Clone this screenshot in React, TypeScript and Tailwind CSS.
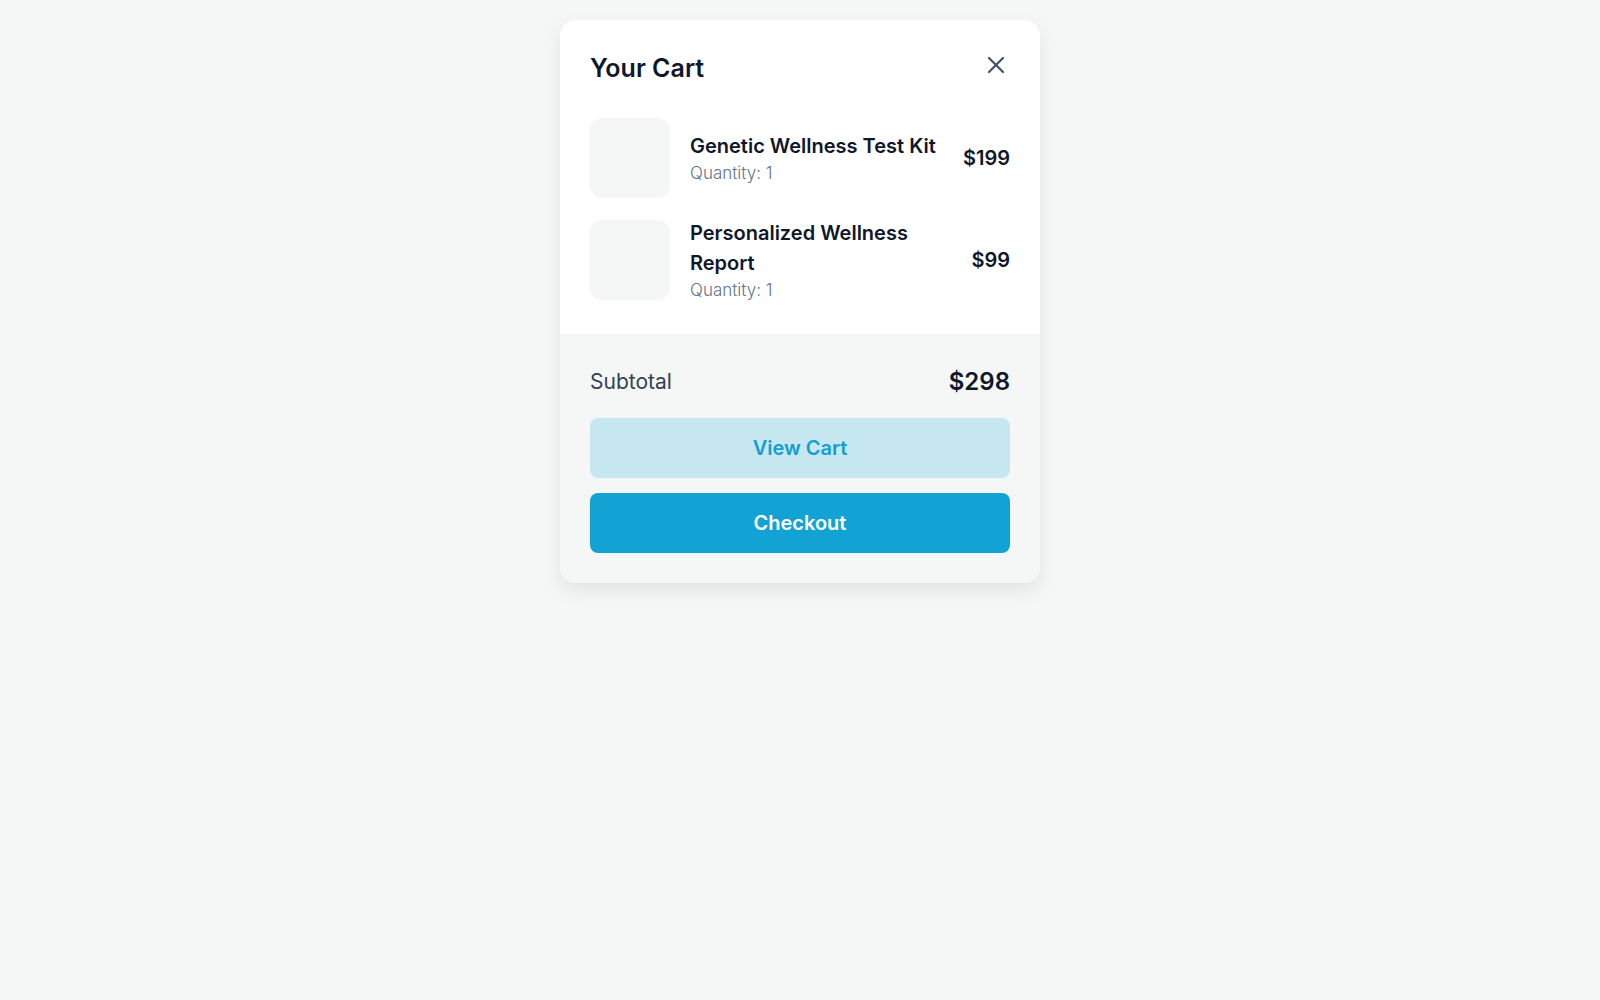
import React from "react";

const items = [
  { name: "Genetic Wellness Test Kit", qty: 1, price: "$199" },
  { name: "Personalized Wellness Report", qty: 1, price: "$99" },
];

export default function App() {
  return (
    <div
      className="min-h-screen w-full bg-[#f5f7f6] flex justify-center pt-5"
      style={{ fontFamily: "Inter, 'Noto Sans', sans-serif" }}
    >
      <div className="w-[480px] self-start rounded-2xl bg-white overflow-hidden shadow-[0_8px_20px_rgba(0,0,0,0.08)]">
        <div className="px-[30px] pt-[30px] pb-[32px]">
          <div className="flex items-start justify-between mb-[31px]">
            <h2 className="text-[25px] leading-[37px] font-semibold text-[#0f172a]">
              Your Cart
            </h2>
            <button className="mt-px text-[#475569]" aria-label="Close">
              <svg width="28" height="28" viewBox="0 0 24 24" fill="none" stroke="currentColor" strokeWidth="2" strokeLinecap="round" strokeLinejoin="round">
                <path d="M18 6 6 18" />
                <path d="m6 6 12 12" />
              </svg>
            </button>
          </div>
          <div className="flex flex-col gap-5">
            {items.map((it) => (
              <div key={it.name} className="flex items-center gap-5">
                <div className="w-20 h-20 shrink-0 rounded-xl bg-[#f5f7f7]" />
                <div className="flex-1 min-w-0">
                  <div className="text-[20px] leading-[30px] font-semibold text-[#0f172a]">{it.name}</div>
                  <div className="text-[17px] leading-[24px] font-light text-[#64748b]">Quantity: {it.qty}</div>
                </div>
                <div className="ml-1 text-[20px] leading-[30px] font-semibold text-[#0f172a]">{it.price}</div>
              </div>
            ))}
          </div>
        </div>
        <div className="bg-[#f5f7f7] px-[30px] pt-[32px] pb-[30px]">
          <div className="flex items-center justify-between h-8 mb-[20px]">
            <span className="text-[21px] text-[#334155]">Subtotal</span>
            <span className="text-[24px] font-semibold text-[#0f172a]">$298</span>
          </div>
          <div className="flex flex-col gap-[15px]">
            <button className="h-[60px] w-full rounded-lg bg-[#c6e7f0] text-[#139fd0] text-[20px] font-semibold">
              View Cart
            </button>
            <button className="h-[60px] w-full rounded-lg bg-[#12a3d4] text-white text-[20px] font-semibold">
              Checkout
            </button>
          </div>
        </div>
      </div>
    </div>
  );
}
